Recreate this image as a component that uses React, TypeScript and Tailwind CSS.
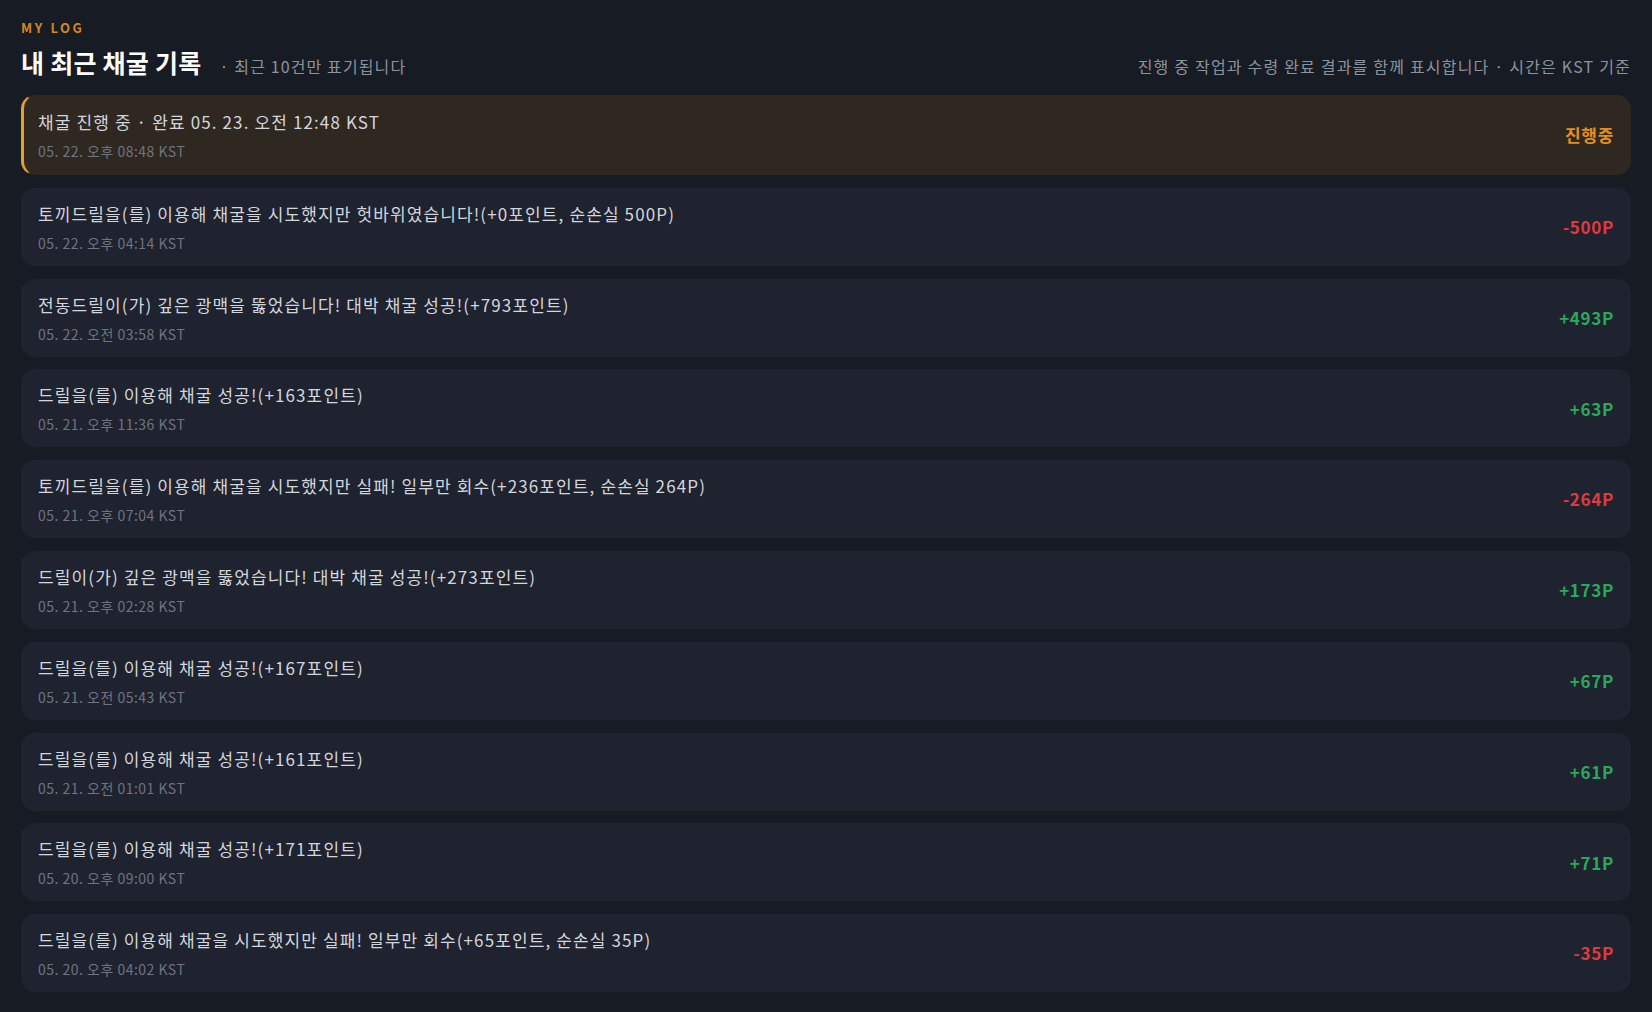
import React from 'react';

interface LogEntry {
  message: string;
  time: string;
  amount: string;
  kind: 'pending' | 'loss' | 'gain';
}

const entries: LogEntry[] = [
  { message: '채굴 진행 중 · 완료 05. 23. 오전 12:48 KST', time: '05. 22. 오후 08:48 KST', amount: '진행중', kind: 'pending' },
  { message: '토끼드릴을(를) 이용해 채굴을 시도했지만 헛바위였습니다!(+0포인트, 순손실 500P)', time: '05. 22. 오후 04:14 KST', amount: '-500P', kind: 'loss' },
  { message: '전동드릴이(가) 깊은 광맥을 뚫었습니다! 대박 채굴 성공!(+793포인트)', time: '05. 22. 오전 03:58 KST', amount: '+493P', kind: 'gain' },
  { message: '드릴을(를) 이용해 채굴 성공!(+163포인트)', time: '05. 21. 오후 11:36 KST', amount: '+63P', kind: 'gain' },
  { message: '토끼드릴을(를) 이용해 채굴을 시도했지만 실패! 일부만 회수(+236포인트, 순손실 264P)', time: '05. 21. 오후 07:04 KST', amount: '-264P', kind: 'loss' },
  { message: '드릴이(가) 깊은 광맥을 뚫었습니다! 대박 채굴 성공!(+273포인트)', time: '05. 21. 오후 02:28 KST', amount: '+173P', kind: 'gain' },
  { message: '드릴을(를) 이용해 채굴 성공!(+167포인트)', time: '05. 21. 오전 05:43 KST', amount: '+67P', kind: 'gain' },
  { message: '드릴을(를) 이용해 채굴 성공!(+161포인트)', time: '05. 21. 오전 01:01 KST', amount: '+61P', kind: 'gain' },
  { message: '드릴을(를) 이용해 채굴 성공!(+171포인트)', time: '05. 20. 오후 09:00 KST', amount: '+71P', kind: 'gain' },
  { message: '드릴을(를) 이용해 채굴을 시도했지만 실패! 일부만 회수(+65포인트, 순손실 35P)', time: '05. 20. 오후 04:02 KST', amount: '-35P', kind: 'loss' },
];

const amountColor = (kind: LogEntry['kind']) => {
  if (kind === 'pending') return 'text-[#e3901f]';
  if (kind === 'loss') return 'text-[#e03a3e]';
  return 'text-[#2aa85c]';
};

const LogRow: React.FC<{ entry: LogEntry }> = ({ entry }) => {
  const pending = entry.kind === 'pending';
  return (
    <div
      className={
        pending
          ? 'flex items-center justify-between rounded-[14px] border border-l-[3px] border-[#2f2821] border-l-[#e3a02a] bg-[#2f2821] py-[14px] pl-[14px] pr-4'
          : 'flex items-center justify-between rounded-[14px] bg-[#1f2330] py-[14px] pl-[17px] pr-[17px]'
      }
    >
      <div className="min-w-0">
        <p className="text-[17px] leading-6 tracking-[0.066em] text-[#d3d6dc]">{entry.message}</p>
        <p className="mt-2 text-[14px] leading-[18px] tracking-[0.035em] text-[#6e7480]">{entry.time}</p>
      </div>
      <span className={`text-[17px] font-bold tracking-[0.04em] ${amountColor(entry.kind)}`}>{entry.amount}</span>
    </div>
  );
};

const App: React.FC = () => {
  return (
    <div
      className="min-h-screen bg-[#171b24] px-[21px] pt-5 pb-[22px]"
      style={{ fontFamily: '"Noto Sans CJK KR", "Noto Sans", sans-serif' }}
    >
      {/* 헤더 */}
      <div className="text-[13px] font-bold leading-4 tracking-[0.2em] text-[#d4871c]">MY LOG</div>
      <div className="mt-[10px] mb-[17px] flex items-end justify-between">
        <div className="flex items-baseline gap-[18px]">
          <h1 className="text-[25px] font-bold leading-8 tracking-[0.01em] text-white">내 최근 채굴 기록</h1>
          <span className="text-[16px] tracking-[0.07em] text-[#8d939e]">· 최근 10건만 표기됩니다</span>
        </div>
        <span className="text-[16px] tracking-[0.075em] text-[#8d939e]">
          진행 중 작업과 수령 완료 결과를 함께 표시합니다 · 시간은 KST 기준
        </span>
      </div>

      {/* 기록 목록 */}
      <div className="flex flex-col gap-[12.8px]">
        {entries.map((entry, index) => (
          <LogRow key={index} entry={entry} />
        ))}
      </div>
    </div>
  );
};

export default App;
